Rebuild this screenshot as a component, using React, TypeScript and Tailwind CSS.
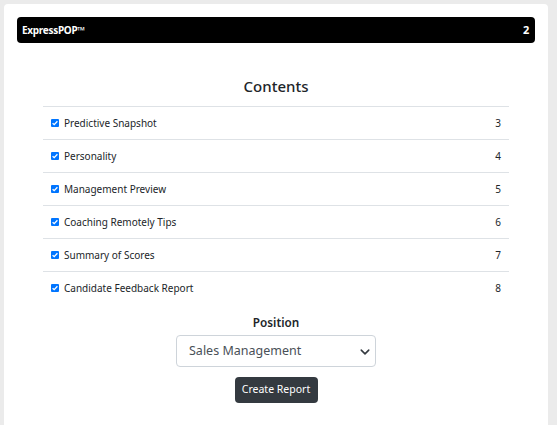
import React from 'react';

const SECTIONS = [
  { name: 'Predictive Snapshot', page: 3 },
  { name: 'Personality', page: 4 },
  { name: 'Management Preview', page: 5 },
  { name: 'Coaching Remotely Tips', page: 6 },
  { name: 'Summary of Scores', page: 7 },
  { name: 'Candidate Feedback Report', page: 8 },
];

function Check() {
  return (
    <span className="flex items-center justify-center w-[8px] h-[8px] rounded-[1px] bg-[#0075ff]">
      <svg viewBox="0 0 8 8" className="w-[8px] h-[8px]" fill="none">
        <path d="M1.6 4.2 L3.2 5.7 L6.4 2.2" stroke="white" strokeWidth="1.3" />
      </svg>
    </span>
  );
}

export default function App() {
  return (
    <div className="min-h-[425px] bg-[#ebebeb] pt-[4px] pl-[4px] pr-[9px] font-['Noto_Sans',sans-serif]">
      <div className="bg-white rounded-t-[4px] p-[13px] h-[421px]">
        {/* header bar */}
        <div className="flex items-center justify-between h-[26px] bg-black rounded-[4px] pl-[5px] pr-[6px] text-white text-[10px] font-bold tracking-[-0.3px]">
          <span>ExpressPOP™</span>
          <span className="text-[11px]">2</span>
        </div>

        <h2 className="mt-[32px] text-center text-[15px] font-medium text-[#212529] leading-[22px]">Contents</h2>

        <div className="mt-[9px] w-[466px] mx-auto">
          {SECTIONS.map((s) => (
            <div key={s.name} className="flex items-center h-[33px] border-t border-[#dee2e6] pl-[8px] pr-[8px] text-[10px] text-[#212529]">
              <Check />
              <span className="ml-[5px]">{s.name}</span>
              <span className="ml-auto">{s.page}</span>
            </div>
          ))}
        </div>

        <div className="flex flex-col items-center">
          <label className="mt-[8px] text-[11.75px] font-semibold text-[#212529] leading-[20px]">Position</label>
          <div className="mt-[3px] relative w-[200px] h-[32px] border border-[#ced4da] rounded-[4px] flex items-center pl-[12px] text-[12.5px] text-[#495057]">
            Sales Management
            <svg viewBox="0 0 16 16" className="absolute right-[5px] top-[11px] w-[10px] h-[10px]" fill="none">
              <path d="M2 5 L8 11 L14 5" stroke="#343a40" strokeWidth="2.5" strokeLinecap="round" strokeLinejoin="round" />
            </svg>
          </div>
          <button className="mt-[10px] h-[26px] w-[83px] bg-[#343a40] rounded-[4px] text-white text-[10.5px]">Create Report</button>
        </div>
      </div>
    </div>
  );
}
